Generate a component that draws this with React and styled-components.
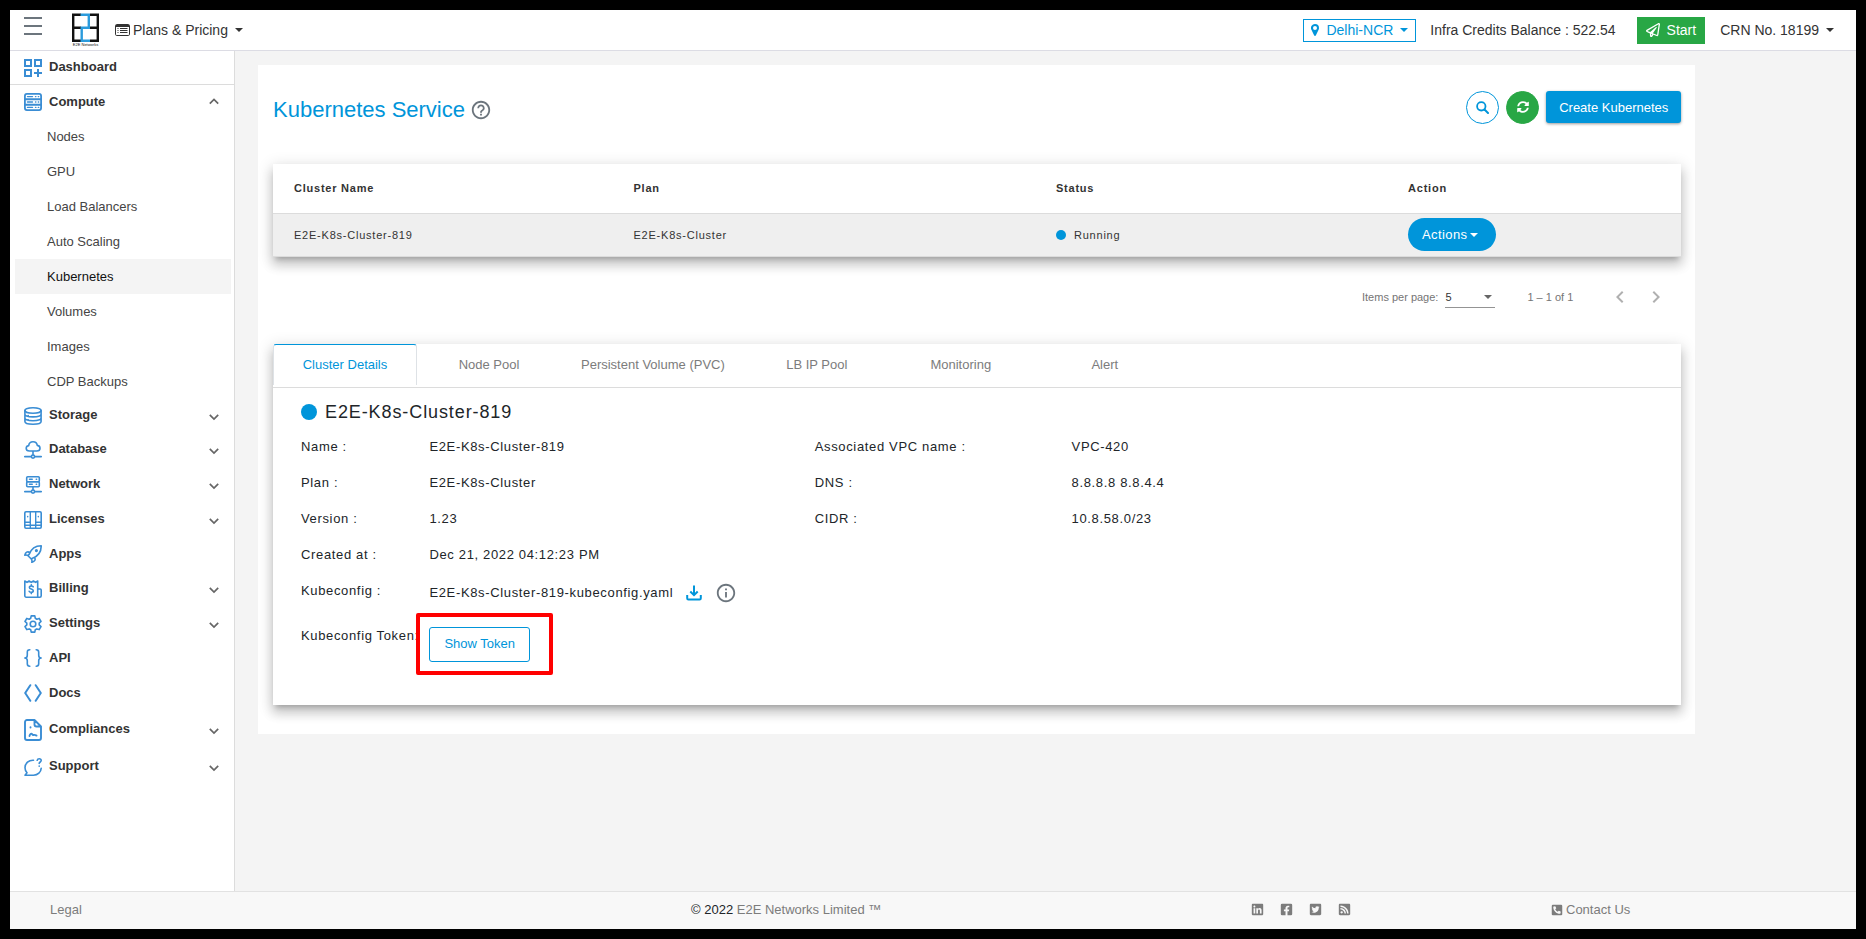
import React, { useState } from "react";
import styled, { createGlobalStyle } from "styled-components";
import {
  FaFacebookSquare,
  FaLinkedin,
  FaPhoneSquareAlt,
  FaRegPaperPlane,
  FaRssSquare,
  FaSyncAlt,
  FaTwitterSquare,
} from "react-icons/fa";
import {
  MdChevronLeft,
  MdChevronRight,
  MdHelpOutline,
  MdOutlineInfo,
} from "react-icons/md";

const GlobalStyle = createGlobalStyle`
  * {
    box-sizing: border-box;
  }

  body {
    margin: 0;
    background: #000;
    color: #212529;
    font-family: "Liberation Sans", Arial, sans-serif;
    font-size: 13px;
  }

  button, select {
    font-family: inherit;
  }

  a {
    color: inherit;
    text-decoration: none;
  }

  svg {
    flex: none;
  }
`;

const blue = "#0095da";
const green = "#28a745";
const grey = "#6c757d";
const elevation = `
  0 5px 5px -3px rgba(0, 0, 0, 0.2),
  0 8px 10px 1px rgba(0, 0, 0, 0.14),
  0 3px 14px 2px rgba(0, 0, 0, 0.12)
`;

const Page = styled.div`
  display: flex;
  flex-direction: column;
  min-height: 100vh;
  border: 10px solid #000;
  background: #f4f4f4;
`;

/* top bar */

const TopBar = styled.header`
  display: flex;
  align-items: center;
  height: 41px;
  padding: 0 22px 0 14px;
  border-bottom: 1px solid #dcdce4;
  background: #fff;
  color: #333;
  font-size: 14px;
`;

const MenuButton = styled.button`
  display: flex;
  flex-direction: column;
  gap: 6px;
  width: 18px;
  padding: 0 0 9px;
  border: 0;
  background: none;
  cursor: pointer;
`;

const MenuLine = styled.span`
  height: 2px;
  background: ${grey};
`;

const LogoLink = styled.a`
  display: flex;
  margin: 0 16px 0 30px;
`;

const BarButton = styled.button`
  display: flex;
  align-items: center;
  gap: 7px;
  padding: 0;
  border: 0;
  background: none;
  color: inherit;
  font-size: 14px;
  line-height: 16px;
  white-space: nowrap;
`;

const BarLabel = styled.span`
  display: flex;
  align-items: center;
  gap: 3px;
`;

const BarRight = styled.div`
  display: flex;
  align-items: center;
  margin-left: auto;
  white-space: nowrap;
`;

const RegionButton = styled(BarButton)`
  height: 23px;
  padding: 0 7px;
  border: 1px solid ${blue};
  color: ${blue};
`;

const Balance = styled.span`
  margin: 0 21px 0 14px;
`;

const StartButton = styled(BarButton)`
  height: 27px;
  margin-right: 15px;
  padding: 0 9px;
  background: ${green};
  color: #fff;
`;

const Caret = styled.span`
  border: 4px solid transparent;
  border-top-color: currentColor;
  border-bottom: 0;
`;

/* side menu */

const Body = styled.div`
  display: flex;
  flex: 1;
`;

const Sidebar = styled.nav`
  flex: none;
  width: 225px;
  border-right: 1px solid #dcdcdc;
  background: #fff;
`;

const MenuItem = styled.a`
  display: flex;
  align-items: center;
  height: ${(props) => props.$height || 35}px;
  padding: 0 15px 0 14px;
  border-bottom: ${(props) => (props.$divided ? "1px solid #dcdcdc" : "0")};
  color: #333;
  font-weight: bold;
`;

const MenuText = styled.span`
  flex: 1;
  padding: 0 0 2px 7px;
`;

const SubList = styled.ul`
  margin: 0;
  padding: 0 3px 0 5px;
  list-style: none;
`;

const SubItem = styled.a`
  display: block;
  padding-left: 32px;
  background: ${(props) => (props.$active ? "#f4f4f4" : "none")};
  color: ${(props) => (props.$active ? "#111" : "#444")};
  line-height: 35px;
`;

/* content */

const Main = styled.main`
  flex: 1;
  padding: 14px 1px 14px 23px;
`;

const Card = styled.section`
  width: 90%;
  padding: 25px 14px 29px 15px;
  background: #fff;
`;

const CardHead = styled.div`
  display: flex;
  align-items: center;
  height: 34px;
  margin-bottom: 40px;
`;

const Title = styled.h1`
  display: flex;
  align-items: center;
  gap: 5px;
  margin: 0;
  padding-top: 6px;
  color: ${blue};
  font-size: 22px;
  font-weight: normal;
`;

const HelpButton = styled.button`
  display: flex;
  padding: 0;
  border: 0;
  background: none;
  color: ${grey};
  font-size: 22px;
`;

const HeadActions = styled.div`
  display: flex;
  align-items: center;
  gap: 7px;
  margin-left: auto;
`;

const RoundButton = styled.button`
  display: flex;
  align-items: center;
  justify-content: center;
  width: 33px;
  height: 33px;
  padding: 0;
  border: 1px solid ${(props) => (props.$filled ? green : blue)};
  border-radius: 50%;
  background: ${(props) => (props.$filled ? green : "#fff")};
  color: ${(props) => (props.$filled ? "#fff" : blue)};
  font-size: 12px;
`;

const CreateButton = styled.button`
  height: 32px;
  padding: 0 13px;
  border: 0;
  border-radius: 3px;
  background: ${blue};
  box-shadow: 0 1px 3px rgba(0, 0, 0, 0.4);
  color: #fff;
  font-size: 13px;
`;

const Table = styled.table`
  width: 100%;
  border-collapse: collapse;
  background: #fff;
  box-shadow: ${elevation};
  color: #333;
  font-size: 11px;
  letter-spacing: 0.07em;
  text-align: left;
  table-layout: fixed;
`;

const HeadCell = styled.th`
  width: ${(props) => props.$width};
  height: 49px;
  padding: 0 0 0 ${(props) => (props.$first ? 21 : 0)}px;
  border-bottom: 1px solid #dcdcdc;
`;

const Cell = styled.td`
  height: 43px;
  padding: 0 0 0 ${(props) => (props.$first ? 21 : 0)}px;
  border-bottom: 1px solid #dcdcdc;
  background: #efefef;
`;

const Status = styled.span`
  display: flex;
  align-items: center;
  gap: ${(props) => props.$gap}px;
`;

const Dot = styled.span`
  width: ${(props) => props.$size}px;
  height: ${(props) => props.$size}px;
  border-radius: 50%;
  background: ${blue};
`;

const ActionsButton = styled.button`
  display: flex;
  align-items: center;
  gap: 3px;
  height: 33px;
  padding: 0 18px 0 14px;
  border: 0;
  border-radius: 17px;
  background: ${blue};
  color: #fff;
  font-size: 13px;
  letter-spacing: 0.03em;
`;

const Paginator = styled.div`
  display: flex;
  align-items: center;
  justify-content: flex-end;
  height: 80px;
  margin-bottom: 7px;
  padding-right: 13px;
  color: #757575;
  font-size: 11px;
`;

const PageSize = styled.div`
  position: relative;
  width: 50px;
  margin: 0 32px 0 7px;
  padding-top: 2px;
  border-bottom: 1px solid #949494;
`;

const PageSelect = styled.select`
  width: 100%;
  height: 20px;
  padding: 0;
  border: 0;
  appearance: none;
  background: none;
  color: #333;
  font-size: 11px;
`;

const SelectCaret = styled(Caret)`
  position: absolute;
  top: 10px;
  right: 3px;
  color: #666;
  pointer-events: none;
`;

const PageArrows = styled.div`
  display: flex;
  gap: 12px;
  margin-left: 35px;
`;

const PageArrow = styled.button`
  display: flex;
  padding: 0;
  border: 0;
  background: none;
  color: #b0b0b0;
  font-size: 24px;
`;

const Panel = styled.section`
  background: #fff;
  box-shadow: ${elevation};
`;

const Tabs = styled.div`
  display: flex;
  height: 44px;
  padding-bottom: 2px;
  border-bottom: 1px solid #dcdcdc;
`;

const Tab = styled.button`
  min-width: 144px;
  padding: 0 19px;
  border: 1px solid ${(props) => (props.$active ? "#dee2e6" : "transparent")};
  border-top-color: ${(props) => (props.$active ? blue : "transparent")};
  border-bottom: 0;
  border-radius: 3px 3px 0 0;
  background: none;
  color: ${(props) => (props.$active ? blue : "#7c7c7c")};
  font-size: 13px;
`;

const ClusterTitle = styled.h2`
  display: flex;
  align-items: center;
  gap: 8px;
  height: 41px;
  margin: 0;
  padding: 8px 0 0 28px;
  font-size: 18px;
  font-weight: normal;
  letter-spacing: 0.05em;
`;

const Details = styled.div`
  display: grid;
  grid-template-columns: 4fr 6fr;
  padding: 0 96px 43px 28px;
  letter-spacing: 0.05em;
`;

const DetailList = styled.dl`
  margin: 0;
`;

const DetailRow = styled.div`
  display: grid;
  grid-template-columns: 1fr ${(props) => props.$valueShare}fr;
  line-height: 36px;
  white-space: nowrap;
`;

const Term = styled.dt`
  min-width: 0;
`;

const Value = styled.dd`
  margin: 0;
`;

const FileValue = styled(Value)`
  display: flex;
  align-items: center;
  height: 40px;
  margin-bottom: 5px;
`;

const IconButton = styled.button`
  display: flex;
  margin-left: 13px;
  padding: 0;
  border: 0;
  background: none;
  color: ${(props) => props.$color};
  font-size: 22px;
`;

const TokenHighlight = styled.span`
  position: relative;
  display: inline-flex;
  margin-top: 9px;

  &::after {
    content: "";
    position: absolute;
    inset: -14px -23px -13px -13px;
    border: 4px solid #f00;
    border-radius: 2px;
    pointer-events: none;
  }
`;

const TokenButton = styled.button`
  height: 35px;
  padding: 0 14px 2px;
  border: 1px solid ${blue};
  border-radius: 3px;
  background: #fff;
  color: ${blue};
  font-size: 13px;
`;

/* footer */

const Footer = styled.footer`
  display: grid;
  grid-template-columns: 641fr 560fr 300fr 305fr;
  align-items: center;
  height: 38px;
  padding: 0 0 2px 40px;
  border-top: 1px solid #e2e2e2;
  background: #f8f8f8;
  color: #7c7c7c;
`;

const Dark = styled.span`
  color: #212529;
`;

const Socials = styled.div`
  display: flex;
  gap: 16px;
`;

const IconLink = styled.a`
  display: flex;
  align-items: center;
  gap: 3px;
`;

const Svg = ({ children, height = 18 }) => (
  <svg
    width="18"
    height={height}
    viewBox={`0 0 18 ${height}`}
    fill="none"
    stroke="#3a8dd4"
    strokeWidth="1.6"
    strokeLinecap="round"
    strokeLinejoin="round"
    aria-hidden="true"
  >
    {children}
  </svg>
);

const icons = {
  dashboard: (
    <Svg>
      <g strokeWidth="2" strokeLinejoin="miter" strokeLinecap="butt">
        <path d="M1 1h6v6H1zM11 1h6v6h-6zM1 11h6v6H1zM14 10v8M10 14h8" />
      </g>
    </Svg>
  ),
  compute: (
    <Svg>
      <rect x=".9" y=".9" width="16.2" height="16.2" rx="2" strokeWidth="1.8" />
      <path d="M1 6.3h16M1 11.7h16" strokeWidth="2" />
      <path d="M3.5 3.6h5M3.5 9h5M3.5 14.4h5M11.5 3.6h.4M14.3 3.6h.4M11.5 9h.4M14.3 9h.4M11.5 14.4h.4M14.3 14.4h.4" strokeWidth="1.4" />
    </Svg>
  ),
  storage: (
    <Svg>
      <ellipse cx="9" cy="3.5" rx="8.1" ry="2.7" />
      <path d="M.9 3.5v11c0 1.600 3.600 2.700 8.100 2.700s8.100-1.100 8.100-2.700v-11M.9 7.300c0 1.500 3.600 2.600 8.100 2.600s8.100-1.100 8.100-2.600M.9 11.100c0 1.500 3.600 2.600 8.100 2.600s8.100-1.100 8.100-2.600M4.200 8.500v.2M4.200 12.700v.2" />
    </Svg>
  ),
  database: (
    <Svg>
      <path d="M5.4 10C3.5 10 2.2 8.900 2.2 7.300c0-1.500 1.100-2.500 2.500-2.700C5 2.200 6.700.8 9 .8s4 1.400 4.300 3.600c1.600.2 2.700 1.300 2.700 2.800 0 1.700-1.400 2.800-3.200 2.800zM9 10v4M.7 15.600h6.600M10.700 15.600h6.600" />
      <circle cx="9" cy="15.600" r="1.600" />
    </Svg>
  ),
  network: (
    <Svg>
      <rect x="2.700" y=".8" width="12.600" height="5" rx="1" />
      <rect x="2.700" y="5.800" width="12.600" height="5" rx="1" />
      <path d="M5.500 3.300h2.700M12.300 3.300h.3M5.500 8.300h2.700M12.300 8.300h.3M9 11v3M.7 15.600h6.600M10.700 15.600h6.600" />
      <circle cx="9" cy="15.600" r="1.600" />
    </Svg>
  ),
  licenses: (
    <Svg>
      <rect x=".8" y=".8" width="16.400" height="16.400" rx="1.200" />
      <path d="M6.300 1v16M11.700 1v16M1 11.300h5.300M1 14.200h5.300M6.300 14.200h5.400M11.700 11.300H17M11.700 14.200H17M3.700 5.500v.3M14.300 5.500v.3" strokeWidth="1.400" />
    </Svg>
  ),
  apps: (
    <Svg>
      <path d="M5 9.600C7 4.300 11 .8 17.200.8c.1 6.200-3.500 10.400-8.700 12.500L7.300 14 4 10.800zM5.800 7.600C3.500 5.800 1.500 7.400.8 10.200c1.200-.4 2.200-.3 3.300.5M10.400 12.300c1.700 2.300.2 4.300-2.600 5 .4-1.200.3-2.200-.5-3.300" />
      <circle cx="12.400" cy="5.600" r=".8" />
    </Svg>
  ),
  billing: (
    <Svg>
      <path d="M13.700 17.200H2.200c-.8 0-1.400-.6-1.400-1.400V1l2.200 1.400L5.100 1l2.200 1.400L9.400 1l2.200 1.400L13.700 1v16.200zM13.700 9h2.500c.6 0 1 .4 1 1v5.800c0 .8-.6 1.400-1.400 1.400h-2.100" />
      <path d="M9.200 6.800C8.800 6.200 8 6 7.300 6c-1 0-1.900.5-1.900 1.500 0 2.100 3.900 1 3.900 3.200 0 1-.9 1.600-2 1.600-.9 0-1.700-.3-2.100-1M7.300 4.800V6M7.300 12.300v1.300" />
    </Svg>
  ),
  settings: (
    <Svg>
      <path d="M7.200.9h3.600l.5 2.400 1.500.9 2.400-.8 1.800 3.100-1.800 1.700v1.700l1.800 1.700-1.800 3-2.400-.7-1.500.8-.5 2.400H7.200l-.5-2.400-1.500-.8-2.400.7-1.800-3 1.800-1.700V8.200L1 6.500l1.800-3.100 2.400.8 1.500-.9z" />
      <circle cx="9" cy="9" r="2.800" />
    </Svg>
  ),
  api: (
    <Svg>
      <path d="M5.800.8C3.900.8 3.300 1.600 3.300 3.300v2.900C3.300 7.900 2.600 9 .8 9c1.800 0 2.500 1.100 2.500 2.800v2.900c0 1.700.6 2.500 2.500 2.500M12.200.8c1.900 0 2.500.8 2.500 2.500v2.900c0 1.700.7 2.800 2.500 2.800-1.800 0-2.500 1.100-2.500 2.800v2.900c0 1.700-.6 2.500-2.500 2.500" />
    </Svg>
  ),
  docs: (
    <Svg>
      <path d="M6.300 1.200L1.200 9l5.100 7.800M11.700 1.200L16.800 9l-5.100 7.800" strokeWidth="2" />
    </Svg>
  ),
  compliances: (
    <Svg height={22}>
      <path d="M10.500 1H3C1.800 1 1 1.800 1 3v16c0 1.200.8 2 2 2h12c1.200 0 2-.8 2-2V7.500zM10.500 1v4.500c0 1.200.8 2 2 2H17" strokeWidth="1.900" />
      <path d="M6.500 8.300v.2M5.500 17c.4-1.600 1.300-2.600 2.300-2.200.8.300.5 1.400 1.500 1.200 1.200-.3 2-.2 3.200.6" strokeWidth="1.900" />
    </Svg>
  ),
  support: (
    <Svg>
      <path d="M9.500 2.200C4.800 1.900 1 5.300 1 9.700c0 2 .8 3.700 2 5L1 17.200h8.500c4.300 0 7.500-3 7.700-7" />
      <path d="M13.200 2.300C13.400 1.300 14.200.8 15.200.8c1.100 0 2 .6 2 1.700 0 1.500-2 1.500-2 3M15.200 8v.2" />
    </Svg>
  ),
};

const Chevron = ({ up }) => (
  <svg width="10" height="10" viewBox="0 0 10 10" fill="none" stroke="#666" strokeWidth="1.700" aria-hidden="true">
    <path d={up ? "M.8 6.700L5 2.500l4.200 4.200" : "M.8 3.800L5 8l4.200-4.200"} />
  </svg>
);

const Logo = () => (
  <svg width="27" height="34" viewBox="0 0 27 34" role="img" aria-label="E2E Networks">
    <path
      d="M9 1.700H1.200v26H9M1.200 14.700H9M18 1.700h7.800v26H18M18 14.700h7.800"
      fill="none"
      stroke="#111"
      strokeWidth="2.400"
    />
    <path d="M8.500 1.700h8.300v13H9.700v13H18" fill="none" stroke="#2a9bdc" strokeWidth="2.400" />
    <text x="13.500" y="33" fontSize="4" textAnchor="middle" fill="#111">
      E2E Networks
    </text>
  </svg>
);

const PlansIcon = () => (
  <svg width="15" height="12" viewBox="0 0 15 12" aria-hidden="true">
    <rect x=".5" y=".5" width="14" height="11" rx="1.200" fill="none" stroke="#333" />
    <path d="M1 1h13v2H1z" fill="#333" />
    <path d="M2.500 4.500h1M5 4.500h7.500M2.500 6.500h1M5 6.500h7.500M2.500 8.500h1M5 8.500h7.500" stroke="#333" />
  </svg>
);

const PinIcon = () => (
  <svg width="8" height="12" viewBox="0 0 8 12" aria-hidden="true">
    <path
      fill="currentColor"
      fillRule="evenodd"
      d="M4 0a4 4 0 0 1 4 4c0 .6-.1 1.100-.3 1.600L4.800 11.500c-.3.6-1.300.6-1.600 0L.3 5.600A4 4 0 0 1 4 0zm0 2a2 2 0 1 0 0 4 2 2 0 0 0 0-4z"
    />
  </svg>
);

const SearchIcon = () => (
  <svg width="13" height="13" viewBox="0 0 13 13" fill="none" stroke="currentColor" strokeWidth="1.800" strokeLinecap="round" aria-hidden="true">
    <circle cx="5.300" cy="5.300" r="4.200" />
    <path d="M8.500 8.500l3.500 3.500" strokeWidth="2" />
  </svg>
);

const DownloadIcon = () => (
  <svg width="16" height="16" viewBox="0 0 16 16" fill="none" stroke="currentColor" strokeWidth="2" aria-hidden="true">
    <path d="M1.200 10v3.200c0 .7.500 1.200 1.200 1.200h11.200c.7 0 1.200-.5 1.200-1.200V10M8 .5v9M4.300 6.500L8 10.200l3.700-3.700" />
  </svg>
);

const computeItems = [
  "Nodes",
  "GPU",
  "Load Balancers",
  "Auto Scaling",
  "Kubernetes",
  "Volumes",
  "Images",
  "CDP Backups",
];

const menuItems = [
  { label: "Storage", icon: "storage", expands: true, height: 33 },
  { label: "Database", icon: "database", expands: true },
  { label: "Network", icon: "network", expands: true },
  { label: "Licenses", icon: "licenses", expands: true },
  { label: "Apps", icon: "apps", height: 34 },
  { label: "Billing", icon: "billing", expands: true },
  { label: "Settings", icon: "settings", expands: true },
  { label: "API", icon: "api", height: 34 },
  { label: "Docs", icon: "docs", height: 36 },
  { label: "Compliances", icon: "compliances", expands: true, height: 37 },
  { label: "Support", icon: "support", expands: true, height: 37 },
];

const tabs = [
  "Cluster Details",
  "Node Pool",
  "Persistent Volume (PVC)",
  "LB IP Pool",
  "Monitoring",
  "Alert",
];

const clusterFields = [
  ["Name :", "E2E-K8s-Cluster-819"],
  ["Plan :", "E2E-K8s-Cluster"],
  ["Version :", "1.23"],
  ["Created at :", "Dec 21, 2022 04:12:23 PM"],
];

const networkFields = [
  ["Associated VPC name :", "VPC-420"],
  ["DNS :", "8.8.8.8 8.8.4.4"],
  ["CIDR :", "10.8.58.0/23"],
];

const Header = () => (
  <TopBar>
    <MenuButton aria-label="Toggle menu">
      <MenuLine />
      <MenuLine />
      <MenuLine />
    </MenuButton>
    <LogoLink href="#home">
      <Logo />
    </LogoLink>
    <BarButton>
      <BarLabel>
        <PlansIcon />
        Plans &amp; Pricing
      </BarLabel>
      <Caret />
    </BarButton>
    <BarRight>
      <RegionButton>
        <PinIcon />
        Delhi-NCR
        <Caret />
      </RegionButton>
      <Balance>Infra Credits Balance : 522.54</Balance>
      <StartButton>
        <FaRegPaperPlane size={14} />
        Start
      </StartButton>
      <BarButton>
        CRN No. 18199
        <Caret />
      </BarButton>
    </BarRight>
  </TopBar>
);

const SideMenu = () => (
  <Sidebar>
    <MenuItem href="#dashboard" $height={34} $divided>
      {icons.dashboard}
      <MenuText>Dashboard</MenuText>
    </MenuItem>
    <MenuItem href="#compute" $height={34}>
      {icons.compute}
      <MenuText>Compute</MenuText>
      <Chevron up />
    </MenuItem>
    <SubList>
      {computeItems.map((item) => (
        <li key={item}>
          <SubItem href="#compute" $active={item === "Kubernetes"}>
            {item}
          </SubItem>
        </li>
      ))}
    </SubList>
    {menuItems.map((item) => (
      <MenuItem key={item.label} href={`#${item.icon}`} $height={item.height}>
        {icons[item.icon]}
        <MenuText>{item.label}</MenuText>
        {item.expands && <Chevron />}
      </MenuItem>
    ))}
  </Sidebar>
);

const ClusterTable = () => (
  <Table>
    <thead>
      <tr>
        <HeadCell $width="25.6%" $first>Cluster Name</HeadCell>
        <HeadCell $width="30%">Plan</HeadCell>
        <HeadCell $width="25%">Status</HeadCell>
        <HeadCell $width="19.4%">Action</HeadCell>
      </tr>
    </thead>
    <tbody>
      <tr>
        <Cell $first>E2E-K8s-Cluster-819</Cell>
        <Cell>E2E-K8s-Cluster</Cell>
        <Cell>
          <Status $gap={8}>
            <Dot $size={10} />
            Running
          </Status>
        </Cell>
        <Cell>
          <ActionsButton>
            Actions
            <Caret />
          </ActionsButton>
        </Cell>
      </tr>
    </tbody>
  </Table>
);

const Pagination = () => (
  <Paginator>
    <label htmlFor="page-size">Items per page:</label>
    <PageSize>
      <PageSelect id="page-size" defaultValue="5">
        <option>5</option>
        <option>10</option>
        <option>25</option>
      </PageSelect>
      <SelectCaret />
    </PageSize>
    <span>1 – 1 of 1</span>
    <PageArrows>
      <PageArrow aria-label="Previous page">
        <MdChevronLeft />
      </PageArrow>
      <PageArrow aria-label="Next page">
        <MdChevronRight />
      </PageArrow>
    </PageArrows>
  </Paginator>
);

const ClusterPanel = () => {
  const [activeTab, setActiveTab] = useState(tabs[0]);

  return (
    <Panel>
      <Tabs role="tablist">
        {tabs.map((tab) => (
          <Tab
            key={tab}
            role="tab"
            aria-selected={tab === activeTab}
            $active={tab === activeTab}
            onClick={() => setActiveTab(tab)}
          >
            {tab}
          </Tab>
        ))}
      </Tabs>
      <ClusterTitle>
        <Dot $size={16} />
        E2E-K8s-Cluster-819
      </ClusterTitle>
      <Details>
        <DetailList>
          {clusterFields.map(([term, value]) => (
            <DetailRow key={term} $valueShare={3}>
              <Term>{term}</Term>
              <Value>{value}</Value>
            </DetailRow>
          ))}
          <DetailRow $valueShare={3}>
            <Term>Kubeconfig :</Term>
            <FileValue>
              E2E-K8s-Cluster-819-kubeconfig.yaml
              <IconButton $color={blue} aria-label="Download kubeconfig">
                <DownloadIcon />
              </IconButton>
              <IconButton $color={grey} aria-label="About kubeconfig">
                <MdOutlineInfo />
              </IconButton>
            </FileValue>
          </DetailRow>
          <DetailRow $valueShare={3}>
            <Term>Kubeconfig Token:</Term>
            <Value>
              <TokenHighlight>
                <TokenButton>Show Token</TokenButton>
              </TokenHighlight>
            </Value>
          </DetailRow>
        </DetailList>
        <DetailList>
          {networkFields.map(([term, value]) => (
            <DetailRow key={term} $valueShare={2}>
              <Term>{term}</Term>
              <Value>{value}</Value>
            </DetailRow>
          ))}
        </DetailList>
      </Details>
    </Panel>
  );
};

const App = () => (
  <>
    <GlobalStyle />
    <Page>
      <Header />
      <Body>
        <SideMenu />
        <Main>
          <Card>
            <CardHead>
              <Title>
                Kubernetes Service
                <HelpButton aria-label="Help">
                  <MdHelpOutline />
                </HelpButton>
              </Title>
              <HeadActions>
                <RoundButton aria-label="Search">
                  <SearchIcon />
                </RoundButton>
                <RoundButton $filled aria-label="Refresh">
                  <FaSyncAlt />
                </RoundButton>
                <CreateButton>Create Kubernetes</CreateButton>
              </HeadActions>
            </CardHead>
            <ClusterTable />
            <Pagination />
            <ClusterPanel />
          </Card>
        </Main>
      </Body>
      <Footer>
        <a href="#legal">Legal</a>
        <span>
          <Dark>© 2022</Dark> E2E Networks Limited ™
        </span>
        <Socials>
          <IconLink href="#linkedin" aria-label="LinkedIn">
            <FaLinkedin size={13} />
          </IconLink>
          <IconLink href="#facebook" aria-label="Facebook">
            <FaFacebookSquare size={13} />
          </IconLink>
          <IconLink href="#twitter" aria-label="Twitter">
            <FaTwitterSquare size={13} />
          </IconLink>
          <IconLink href="#blog" aria-label="Blog feed">
            <FaRssSquare size={13} />
          </IconLink>
        </Socials>
        <IconLink href="#contact">
          <FaPhoneSquareAlt size={12} />
          Contact Us
        </IconLink>
      </Footer>
    </Page>
  </>
);

export default App;
